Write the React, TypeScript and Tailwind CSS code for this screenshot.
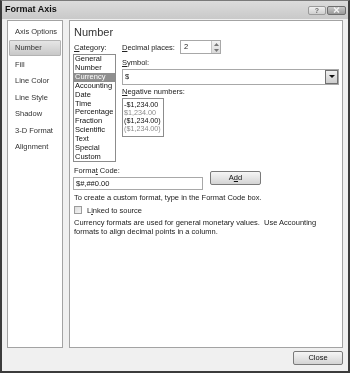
import React from "react";

const font = { fontFamily: '"Liberation Sans", Arial, sans-serif' };

const categories = [
  "General",
  "Number",
  "Currency",
  "Accounting",
  "Date",
  "Time",
  "Percentage",
  "Fraction",
  "Scientific",
  "Text",
  "Special",
  "Custom",
];

const sideItems = ["Axis Options", "Number", "Fill", "Line Color", "Line Style", "Shadow", "3-D Format", "Alignment"];

const negatives = [
  { text: "-$1,234.00", muted: false },
  { text: "$1,234.00", muted: true },
  { text: "($1,234.00)", muted: false },
  { text: "($1,234.00)", muted: true },
];

function TitleButtons() {
  return (
    <div className="flex items-center gap-[1px] pr-[2px]">
      {/* help */}
      <div className="flex h-[9px] w-[18px] items-center justify-center rounded-[2px] border border-[#9a9a9a] bg-gradient-to-b from-[#f0f0f0] to-[#cfcfcf] text-[7px] font-bold leading-none text-[#6b6b6b]">
        ?
      </div>
      {/* close */}
      <div className="flex h-[9px] w-[19px] items-center justify-center rounded-[2px] border border-[#6e6e6e] bg-gradient-to-b from-[#c8c8c8] to-[#9a9a9a]">
        <svg width="7" height="6" viewBox="0 0 7 6">
          <path d="M1 0.5 L6 5.5 M6 0.5 L1 5.5" stroke="#f4f4f4" strokeWidth="1.4" />
        </svg>
      </div>
    </div>
  );
}

export default function App() {
  return (
    <div
      className="flex h-[373px] w-[350px] flex-col border-x-2 border-b-2 border-t border-[#3c3c3c] border-t-[#7a7a7a] bg-[#f0f0f0] text-[7.5px] text-[#222] antialiased grayscale"
      style={font}
    >
      {/* Title bar */}
      <div className="flex h-[18px] shrink-0 items-center justify-between bg-gradient-to-b from-[#dcdcdc] to-[#c9c9c9] pl-[3px]">
        <span className="text-[9px] font-bold text-[#111]">Format Axis</span>
        <TitleButtons />
      </div>

      {/* Body */}
      <div className="flex gap-[6px] pl-[5px] pt-[1px]">
        {/* Sidebar */}
        <div className="h-[328px] w-[56px] border border-[#a3a3a3] bg-white pt-[2px]">
          {sideItems.map((item) => (
            <div
              key={item}
              className={
                item === "Number"
                  ? "mx-[1px] flex h-[16.5px] items-center rounded-[1px] border border-[#b3b3b3] bg-gradient-to-b from-[#e6e6e6] to-[#c8c8c8] pl-[5px] text-[#333]"
                  : "mx-[1px] flex h-[16.5px] items-center border border-transparent pl-[5px] text-[#333]"
              }
            >
              {item}
            </div>
          ))}
        </div>

        {/* Main panel */}
        <div className="h-[328px] w-[274px] border border-[#a3a3a3] bg-white pl-[3px] pt-[5px]">
          <h2 className="ml-[1px] text-[11px] leading-[13px] text-[#333]">Number</h2>

          <div className="mt-[1px] flex">
            {/* Category */}
            <div className="w-[43px]">
              <div className="ml-[1px] mt-[3px] leading-[9px]">
                <span className="underline">C</span>ategory:
              </div>
              <div className="mt-[2px] h-[108px] border border-[#8c8c8c] bg-white">
                {categories.map((c) => (
                  <div
                    key={c}
                    className={
                      c === "Currency"
                        ? "whitespace-nowrap bg-[#8f8f8f] pl-[1px] leading-[8.9px] text-white"
                        : "whitespace-nowrap pl-[1px] leading-[8.9px] text-[#111]"
                    }
                  >
                    {c}
                  </div>
                ))}
              </div>
            </div>

            {/* Right column */}
            <div className="ml-[6px] flex-1">
              <div className="flex h-[14px] items-center">
                <div className="w-[58px] leading-[9px]">
                  <span className="underline">D</span>ecimal places:
                </div>
                <div className="flex h-[14px] w-[41px] items-stretch border border-[#a8a8a8] bg-white">
                  <div className="flex-1 pl-[3px] leading-[12px]">2</div>
                  <div className="flex w-[9px] flex-col border-l border-[#c4c4c4] bg-gradient-to-b from-[#f2f2f2] to-[#dadada]">
                    <div className="flex flex-1 items-center justify-center">
                      <svg width="5" height="3" viewBox="0 0 5 3">
                        <path d="M0 3 L2.5 0 L5 3 Z" fill="#777" />
                      </svg>
                    </div>
                    <div className="flex flex-1 items-center justify-center">
                      <svg width="5" height="3" viewBox="0 0 5 3">
                        <path d="M0 0 L2.5 3 L5 0 Z" fill="#777" />
                      </svg>
                    </div>
                  </div>
                </div>
              </div>

              <div className="mt-[3.5px] leading-[9px]">
                <span className="underline">S</span>ymbol:
              </div>
              <div className="mt-[2px] flex h-[16px] w-[217px] border border-[#a8a8a8] bg-white">
                <div className="flex-1 pl-[2px] leading-[14px] text-[#111]">$</div>
                <div className="flex w-[13px] items-center justify-center border border-[#707070] bg-gradient-to-b from-[#f0f0f0] to-[#cdcdcd]">
                  <svg width="6" height="3" viewBox="0 0 6 3">
                    <path d="M0 0 L6 0 L3 3 Z" fill="#111" />
                  </svg>
                </div>
              </div>

              <div className="mt-[2.5px] leading-[9px]">
                <span className="underline">N</span>egative numbers:
              </div>
              <div className="mt-[2px] h-[39px] w-[42px] border border-[#8c8c8c] bg-white pt-[2px]">
                {negatives.map((n, i) => (
                  <div
                    key={i}
                    className={
                      n.muted
                        ? "whitespace-nowrap pl-[1px] text-[7.2px] leading-[8px] text-[#8c8c8c]"
                        : "whitespace-nowrap pl-[1px] text-[7.2px] leading-[8px] text-[#111]"
                    }
                  >
                    {n.text}
                  </div>
                ))}
              </div>
            </div>
          </div>

          {/* Format code */}
          <div className="mt-[3.5px] flex items-start">
            <div className="w-[130px]">
              <div className="ml-[1px] leading-[9px]">
                Forma<span className="underline">t</span> Code:
              </div>
              <div className="mt-[2.5px] h-[13px] border border-[#a8a8a8] bg-white pl-[2px] leading-[11px] text-[#111]">
                $#,##0.00
              </div>
            </div>
            <button className="ml-[7px] mt-[5.5px] flex h-[14px] w-[51px] items-center justify-center rounded-[2px] border border-[#7a7a7a] bg-gradient-to-b from-[#f6f6f6] to-[#d4d4d4] leading-none text-[#111]">
              A<span className="underline">d</span>d
            </button>
          </div>

          <div className="ml-[1px] mt-[3px] leading-[9px]">To create a custom format, type in the Format Code box.</div>

          <div className="mt-[3.5px] flex h-[9px] items-center">
            <div className="ml-[1px] h-[8px] w-[8px] border border-[#9c9c9c] bg-gradient-to-br from-[#dedede] to-[#f4f4f4]" />
            <div className="ml-[5px] leading-[9px]">
              L<span className="underline">i</span>nked to source
            </div>
          </div>

          <div className="ml-[1px] mt-[3px] leading-[9px]">
            <div>Currency formats are used for general monetary values.&nbsp; Use Accounting</div>
            <div>formats to align decimal points in a column.</div>
          </div>
        </div>
      </div>

      {/* Footer */}
      <div className="flex justify-end pr-[5px] pt-[3px]">
        <button className="flex h-[14px] w-[50px] items-center justify-center rounded-[2px] border border-[#7a7a7a] bg-gradient-to-b from-[#f6f6f6] to-[#d4d4d4] leading-none text-[#111]">
          Close
        </button>
      </div>
    </div>
  );
}
